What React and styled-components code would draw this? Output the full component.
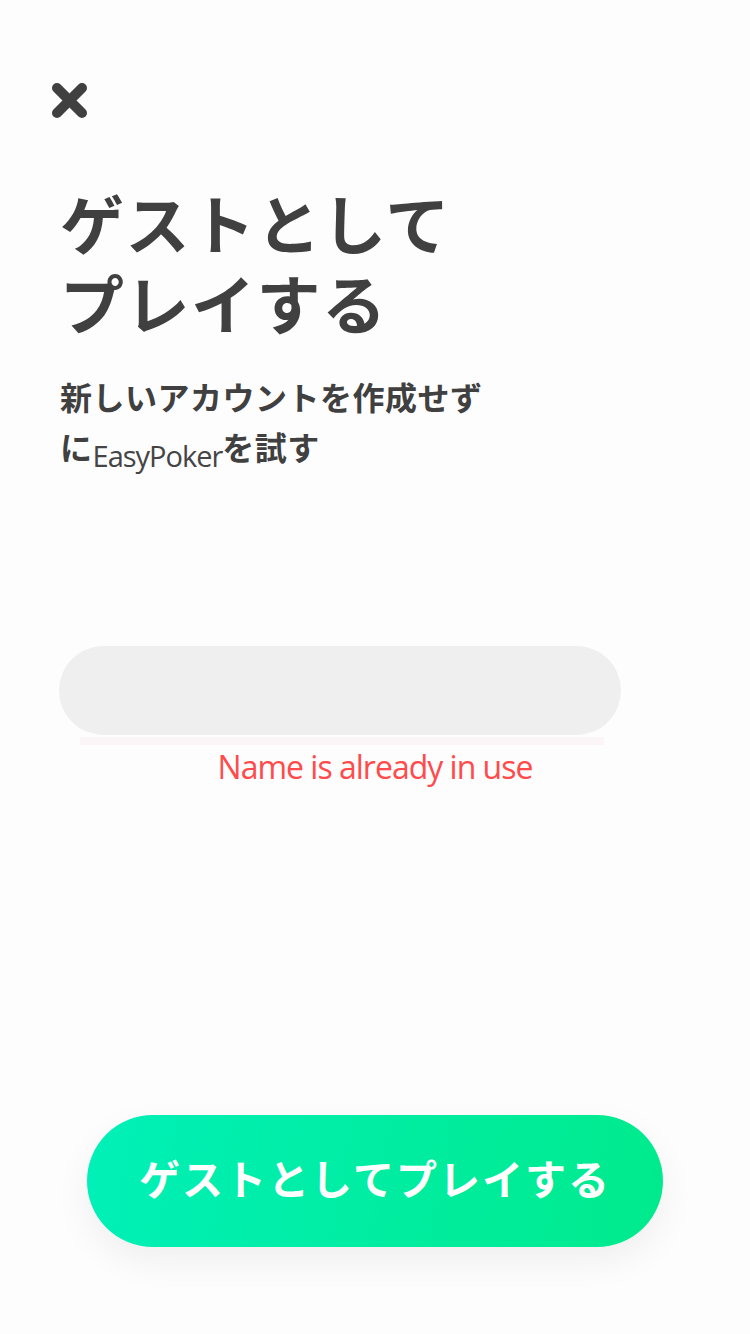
import styled, { createGlobalStyle } from 'styled-components';

const Global = createGlobalStyle`
  html, body {
    margin: 0;
    padding: 0;
    background: #fefdfe;
  }
  body {
    font-family: "Noto Sans CJK JP", "Noto Sans", sans-serif;
  }
`;

const Page = styled.div`
  box-sizing: border-box;
  width: 750px;
  min-height: 1334px;
  display: flex;
  flex-direction: column;
  padding: 82px 0 87px;
  background: #fefdfe;
  color: #404040;
`;

const Close = styled.button`
  width: 37px;
  height: 37px;
  margin-left: 51px;
  padding: 0;
  border: 0;
  background: none;
  display: flex;
`;

const Head = styled.div`
  padding: 0 60px;
  margin-top: 62px;
`;

const Title = styled.h1`
  margin: 0;
  font-size: 64px;
  line-height: 80px;
  font-weight: 700;
  letter-spacing: 1.5px;
`;

const Sub = styled.p`
  margin: 30px 0 0;
  font-size: 32px;
  line-height: 50px;
  font-weight: 700;
  letter-spacing: 0.5px;
`;

const Brand = styled.span`
  font-family: "Open Sans", "Noto Sans", sans-serif;
  font-weight: 400;
  font-size: 29px;
  letter-spacing: -1px;
  vertical-align: -7px;
  color: #454545;
`;

const Field = styled.div`
  margin: 165px 0 0 59px;
  width: 562px;
`;

const Input = styled.input`
  box-sizing: border-box;
  width: 100%;
  height: 89px;
  border: 0;
  border-radius: 45px;
  background: #efefef;
  outline: none;
  padding: 0 36px;
  font-size: 30px;
`;

const Rule = styled.div`
  margin: 2px 0 0 21px;
  width: 524px;
  height: 8px;
  background: #fbf5f7;
`;

const Error = styled.p`
  margin: 0;
  text-align: center;
  font-family: "Open Sans", "Noto Sans", sans-serif;
  font-weight: 500;
  font-size: 32px;
  line-height: 44px;
  letter-spacing: -1px;
  color: #ff4b4b;
`;

const Footer = styled.div`
  margin-top: auto;
  display: flex;
  justify-content: center;
`;

const PlayButton = styled.button`
  width: 576px;
  height: 132px;
  padding: 0 0 8px;
  border: 0;
  border-radius: 66px;
  background: linear-gradient(100deg, #00f0b8 0%, #00ea8c 100%);
  box-shadow: 0 14px 36px rgba(0, 0, 0, 0.06);
  color: #fff;
  font-family: "Noto Sans CJK JP", sans-serif;
  font-weight: 700;
  font-size: 41px;
  letter-spacing: 2px;
`;

export default function App() {
  return (
    <>
      <Global />
      <Page>
        <Close aria-label="close">
          <svg width="37" height="37" viewBox="0 0 37 37">
            <path
              d="M6 6 L31 31 M31 6 L6 31"
              stroke="#404040"
              strokeWidth="10"
              strokeLinecap="round"
            />
          </svg>
        </Close>
        <Head>
          <Title>
            ゲストとして
            <br />
            プレイする
          </Title>
          <Sub>
            新しいアカウントを作成せず
            <br />
            に<Brand>EasyPoker</Brand>を試す
          </Sub>
        </Head>
        <Field>
          <Input type="text" />
          <Rule />
        </Field>
        <Error>Name is already in use</Error>
        <Footer>
          <PlayButton>ゲストとしてプレイする</PlayButton>
        </Footer>
      </Page>
    </>
  );
}
